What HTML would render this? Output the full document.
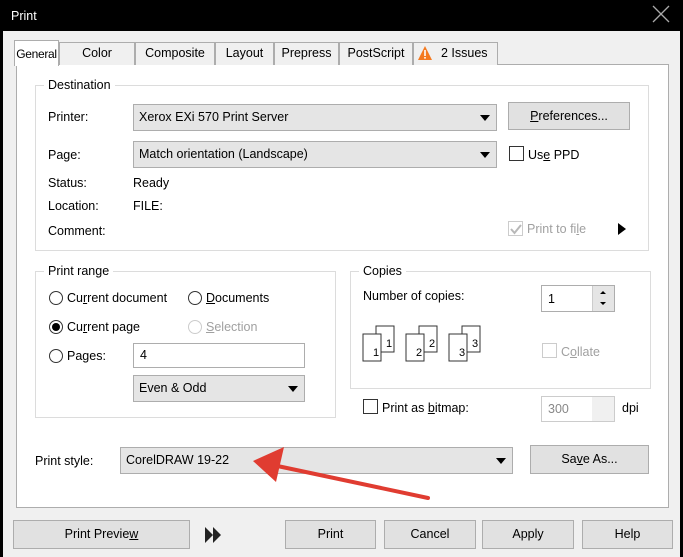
<!DOCTYPE html>
<html><head><meta charset="utf-8"><style>
*{box-sizing:border-box;margin:0;padding:0}
body{width:683px;height:557px;background:#000;position:relative;overflow:hidden;font-family:"Liberation Sans",sans-serif;font-size:12.5px;color:#000}
.a{position:absolute}
.t{position:absolute;white-space:nowrap;line-height:15px}
.tab{position:absolute;top:42px;height:23px;background:#f0f0f0;border:1px solid #adadad;border-bottom:none;text-align:center;line-height:21px;white-space:nowrap}
.grp{position:absolute;border:1px solid #dcdcdc}
.lg{position:absolute;top:-9px;left:8px;background:#fff;padding:0 4px;line-height:16px}
.combo{position:absolute;background:#e5e5e5;border:1px solid #adadad;line-height:24px;padding-left:5px}
.combo:after{content:"";position:absolute;right:6px;top:10px;border-left:5px solid transparent;border-right:5px solid transparent;border-top:6px solid #000}
.btn{position:absolute;background:#e1e1e1;border:1px solid #adadad;text-align:center}
.cb{position:absolute;width:15px;height:15px;border:1px solid #333;background:#fff}
.rd{position:absolute;width:14px;height:14px;border:1px solid #333;border-radius:50%;background:#fff}
.in{position:absolute;background:#fff;border:1px solid #adadad;padding-left:6px}
.dis{color:#a0a0a0}
u{text-decoration:underline}
</style></head><body>
<div class="a" style="left:3px;top:31px;width:677px;height:526px;background:#f0f0f0"></div>
<div class="t" style="left:11px;top:9px;color:#fff;font-size:12.5px">Print</div>
<svg class="a" style="left:652px;top:5px" width="18" height="18"><path d="M1 1L17 17M17 1L1 17" stroke="#aaa" stroke-width="1.3"/></svg>

<div class="a" style="left:16px;top:64px;width:653px;height:444px;background:#fff;border:1px solid #adadad"></div>
<div class="tab" style="left:14px;top:40px;width:45px;height:26px;background:#fff;border-color:#adadad;line-height:27px;font-size:12px;letter-spacing:-0.3px">General</div>
<div class="tab" style="left:59px;width:76px">Color</div>
<div class="tab" style="left:135px;width:80px">Composite</div>
<div class="tab" style="left:215px;width:59px">Layout</div>
<div class="tab" style="left:274px;width:65px">Prepress</div>
<div class="tab" style="left:339px;width:74px">PostScript</div>
<div class="tab" style="left:413px;width:85px;text-align:left;padding-left:27px">2 Issues</div>
<svg class="a" style="left:417px;top:45px" width="16" height="16"><path d="M8 1L15 15H1Z" fill="#f47a20"/><rect x="7.2" y="5" width="1.6" height="6" fill="#fff"/><rect x="7.2" y="12" width="1.6" height="1.6" fill="#fff"/></svg>

<div class="grp" style="left:35px;top:85px;width:614px;height:166px"><div class="lg" style="top:-9px">Destination</div></div>
<div class="t" style="left:48px;top:110px">Printer:</div>
<div class="combo" style="left:133px;top:104px;width:364px;height:27px">Xerox EXi 570 Print Server</div>
<div class="btn" style="left:508px;top:102px;width:122px;height:28px;line-height:26px"><u>P</u>references...</div>
<div class="t" style="left:48px;top:148px">Page:</div>
<div class="combo" style="left:133px;top:141px;width:364px;height:27px">Match orientation (Landscape)</div>
<div class="cb" style="left:509px;top:146px"></div>
<div class="t" style="left:528px;top:148px">Us<u>e</u> PPD</div>
<div class="t" style="left:48px;top:176px">Status:</div><div class="t" style="left:133px;top:176px">Ready</div>
<div class="t" style="left:48px;top:199px">Location:</div><div class="t" style="left:133px;top:199px">FILE:</div>
<div class="t" style="left:48px;top:224px">Comment:</div>
<div class="cb" style="left:508px;top:221px;border-color:#ccc"></div>
<svg class="a" style="left:509px;top:222px" width="14" height="14"><path d="M2 7L5.5 11L12 3" stroke="#b8b8b8" stroke-width="2" fill="none"/></svg>
<div class="t dis" style="left:527px;top:222px">Print to fi<u>l</u>e</div>
<svg class="a" style="left:617px;top:223px" width="10" height="12"><path d="M1 0L9 6L1 12Z" fill="#000"/></svg>

<div class="grp" style="left:35px;top:271px;width:301px;height:147px"><div class="lg">Print range</div></div>
<div class="rd" style="left:49px;top:291px"></div><div class="t" style="left:67px;top:291px">Cu<u>r</u>rent document</div>
<div class="rd" style="left:188px;top:291px"></div><div class="t" style="left:206px;top:291px"><u>D</u>ocuments</div>
<div class="rd" style="left:49px;top:320px"></div><div class="a" style="left:52px;top:323px;width:8px;height:8px;border-radius:50%;background:#000"></div>
<div class="t" style="left:67px;top:320px">Cu<u>r</u>rent page</div>
<div class="rd" style="left:188px;top:320px;border-color:#ccc"></div><div class="t dis" style="left:206px;top:320px"><u>S</u>election</div>
<div class="rd" style="left:49px;top:349px"></div><div class="t" style="left:67px;top:349px">Pa<u>g</u>es:</div>
<div class="in" style="left:133px;top:343px;width:172px;height:25px;line-height:23px">4</div>
<div class="combo" style="left:133px;top:375px;width:172px;height:27px">Even &amp; Odd</div>

<div class="grp" style="left:350px;top:271px;width:301px;height:118px"><div class="lg">Copies</div></div>
<div class="t" style="left:363px;top:289px">Number of copies:</div>
<div class="in" style="left:541px;top:285px;width:74px;height:27px;line-height:26px">1</div>
<div class="a" style="left:592px;top:286px;width:22px;height:25px;background:#e5e5e5;border-left:1px solid #ccc"></div>
<svg class="a" style="left:598px;top:289px" width="10" height="20"><path d="M2 5L5 2L8 5ZM2 13L5 16L8 13Z" fill="#000"/></svg>
<svg class="a" style="left:362px;top:325px" width="126" height="38">
<g fill="#fff" stroke="#333"><rect x="14" y="1" width="18" height="26"/><rect x="1" y="9" width="18" height="27"/>
<rect x="57" y="1" width="18" height="26"/><rect x="44" y="9" width="18" height="27"/>
<rect x="100" y="1" width="18" height="26"/><rect x="87" y="9" width="18" height="27"/></g>
<g font-family="Liberation Sans" font-size="11"><text x="24" y="22">1</text><text x="11" y="31">1</text><text x="67" y="22">2</text><text x="54" y="31">2</text><text x="110" y="22">3</text><text x="97" y="31">3</text></g></svg>
<div class="cb" style="left:542px;top:343px;border-color:#ccc"></div>
<div class="t dis" style="left:561px;top:345px">C<u>o</u>llate</div>
<div class="cb" style="left:363px;top:399px"></div>
<div class="t" style="left:382px;top:401px">Print as <u>b</u>itmap:</div>
<div class="in" style="left:541px;top:396px;width:74px;height:26px;line-height:24px;color:#888;border-color:#ccc">300</div>
<div class="a" style="left:592px;top:397px;width:22px;height:24px;background:#f0f0f0"></div>
<div class="t" style="left:622px;top:401px">dpi</div>

<div class="t" style="left:35px;top:454px">Print style:</div>
<div class="combo" style="left:120px;top:447px;width:393px;height:27px">CorelDRAW 19-22</div>
<div class="btn" style="left:530px;top:445px;width:119px;height:29px;line-height:27px">Sa<u>v</u>e As...</div>
<svg class="a" style="left:0;top:0" width="683" height="557"><path d="M428 498L268 464" stroke="#e03c31" stroke-width="4" stroke-linecap="round"/><path d="M253 461L284 447L276 482Z" fill="#e03c31"/></svg>

<div class="btn" style="left:13px;top:520px;width:177px;height:29px;line-height:27px">Print Previe<u>w</u></div>
<svg class="a" style="left:205px;top:527px" width="18" height="16"><path d="M0 0L8 8L0 16ZM8 0L16 8L8 16Z" fill="#222"/></svg>
<div class="btn" style="left:285px;top:520px;width:91px;height:29px;line-height:27px">Print</div>
<div class="btn" style="left:384px;top:520px;width:92px;height:29px;line-height:27px">Cancel</div>
<div class="btn" style="left:482px;top:520px;width:92px;height:29px;line-height:27px">Apply</div>
<div class="btn" style="left:582px;top:520px;width:91px;height:29px;line-height:27px">Help</div>
</body></html>
